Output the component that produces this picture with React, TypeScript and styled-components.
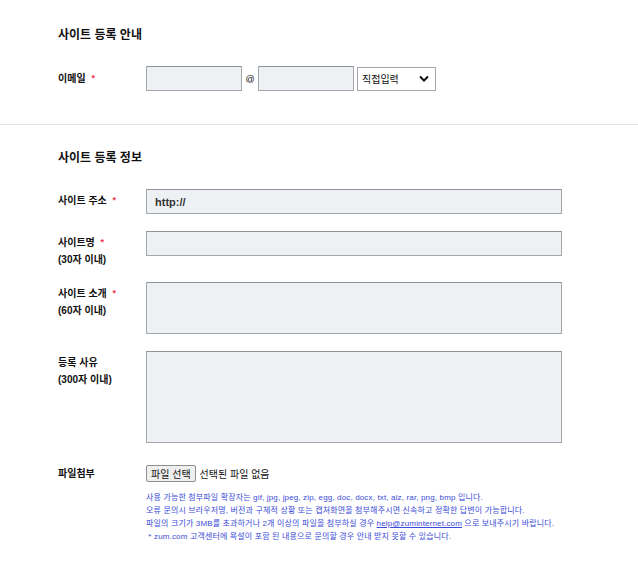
import styled, { createGlobalStyle } from 'styled-components'

const GlobalStyle = createGlobalStyle`
  html, body {
    margin: 0;
    padding: 0;
    background: #fff;
  }
  body {
    font-family: 'Liberation Sans', 'Noto Sans CJK KR', sans-serif;
    color: #111;
  }
`

const Page = styled.div`
  width: 638px;
`

const Section = styled.section<{ $top: number; $bottom: number; $divider?: boolean }>`
  padding: ${({ $top }) => $top}px 0 ${({ $bottom }) => $bottom}px 58px;
  border-bottom: ${({ $divider }) => ($divider ? '1px solid #e3e3e3' : 'none')};
`

const Title = styled.h2`
  margin: 0;
  font-size: 12px;
  line-height: 16px;
  font-weight: bold;
  color: #111;
`

const Row = styled.div<{ $gap: number }>`
  display: grid;
  grid-template-columns: 88px 1fr;
  align-items: start;
  margin-top: ${({ $gap }) => $gap}px;
`

const Label = styled.div<{ $top?: number }>`
  padding-top: ${({ $top }) => ($top ?? 3)}px;
  font-size: 10px;
  line-height: 17px;
  font-weight: bold;
  color: #111;
`

const Required = styled.span`
  color: #f0354f;
  font-size: 9px;
  margin-left: 3px;
  vertical-align: 1px;
`

const Field = styled.div<{ $width?: number }>`
  box-sizing: border-box;
  width: ${({ $width }) => ($width ? `${$width}px` : '416px')};
  height: 25px;
  border: 1px solid #a3a7ab;
  border-top-color: #909499;
  background: #eef1f4;
  padding: 0 8px;
  display: flex;
  align-items: center;
  font-size: 11px;
  font-weight: bold;
  color: #333;
`

const Area = styled.div<{ $height: number }>`
  box-sizing: border-box;
  width: 416px;
  height: ${({ $height }) => $height}px;
  border: 1px solid #a3a7ab;
  border-top-color: #909499;
  background: #eef1f4;
`

const EmailLine = styled.div`
  display: flex;
  align-items: center;
  height: 25px;
`

const At = styled.span`
  width: 16px;
  text-align: center;
  font-size: 9px;
  color: #111;
`

const Select = styled.div`
  box-sizing: border-box;
  margin-left: 3px;
  width: 79px;
  height: 24px;
  border: 1px solid #a3a7ab;
  background: #fff;
  display: flex;
  align-items: center;
  justify-content: space-between;
  padding: 0 6px 0 4px;
  font-size: 10px;
  color: #111;
`

const FileLine = styled.div`
  display: flex;
  align-items: center;
  gap: 4px;
  height: 17px;
  font-size: 10px;
  color: #111;
`

const FileButton = styled.span`
  box-sizing: border-box;
  height: 17px;
  padding: 0 4px;
  border: 1px solid #8f8f8f;
  border-radius: 2px;
  background: #efefef;
  display: flex;
  align-items: center;
  font-size: 10px;
`

const Notes = styled.ul`
  margin: 9px 0 0;
  padding: 0;
  list-style: none;
  color: #3a4bd8;
  font-size: 8px;
  line-height: 13px;
  letter-spacing: 0.15px;
  white-space: nowrap;

  a {
    color: inherit;
    text-decoration: underline;
  }
`

const Chevron = () => (
  <svg width="10" height="7" viewBox="0 0 10 7">
    <path d="M1 1.5 L5 5.5 L9 1.5" fill="none" stroke="#111" strokeWidth="2" />
  </svg>
)

const Req = () => <Required>*</Required>

export default function App() {
  return (
    <Page>
      <GlobalStyle />
      <Section $top={27} $bottom={33} $divider>
        <Title>사이트 등록 안내</Title>
        <Row $gap={23}>
          <Label $top={4}>
            이메일 <Req />
          </Label>
          <EmailLine>
            <Field $width={96} />
            <At>@</At>
            <Field $width={96} />
            <Select>
              <span>직접입력</span>
              <Chevron />
            </Select>
          </EmailLine>
        </Row>
      </Section>
      <Section $top={25} $bottom={40}>
        <Title>사이트 등록 정보</Title>
        <Row $gap={23}>
          <Label>
            사이트 주소 <Req />
          </Label>
          <Field>http://</Field>
        </Row>
        <Row $gap={17}>
          <Label>
            사이트명 <Req />
            <br />
            (30자 이내)
          </Label>
          <Field />
        </Row>
        <Row $gap={14}>
          <Label>
            사이트 소개 <Req />
            <br />
            (60자 이내)
          </Label>
          <Area $height={52} />
        </Row>
        <Row $gap={17}>
          <Label>
            등록 사유
            <br />
            (300자 이내)
          </Label>
          <Area $height={92} />
        </Row>
        <Row $gap={22}>
          <Label $top={0}>파일첨부</Label>
          <div>
            <FileLine>
              <FileButton>파일 선택</FileButton>
              <span>선택된 파일 없음</span>
            </FileLine>
            <Notes>
              <li>사용 가능한 첨부파일 확장자는 gif, jpg, jpeg, zip, egg, doc, docx, txt, alz, rar, png, bmp 입니다.</li>
              <li>오류 문의시 브라우저명, 버전과 구체적 상황 또는 캡쳐화면을 첨부해주시면 신속하고 정확한 답변이 가능합니다.</li>
              <li>
                파일의 크기가 3MB를 초과하거나 2개 이상의 파일을 첨부하실 경우 <a href="#">help@zuminternet.com</a> 으로 보내주시기 바랍니다.
              </li>
              <li>&nbsp;* zum.com 고객센터에 욕설이 포함 된 내용으로 문의할 경우 안내 받지 못할 수 있습니다.</li>
            </Notes>
          </div>
        </Row>
      </Section>
    </Page>
  )
}
